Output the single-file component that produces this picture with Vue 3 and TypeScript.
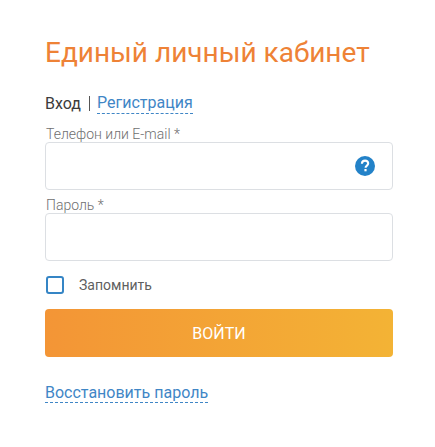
<template>
  <div class="login">
    <h1 class="title">Единый личный кабинет</h1>
    <div class="tabs">
      <span class="tab-active">Вход</span>
      <span class="tab-sep"></span>
      <a class="dashed-link" href="#">Регистрация</a>
    </div>
    <form class="form" @submit.prevent>
      <label class="field">
        <span class="field-label">Телефон или E-mail *</span>
        <span class="input-wrap">
          <input v-model="login" class="input" type="text" />
          <svg class="hint" viewBox="0 0 20 20" aria-hidden="true">
            <circle cx="10" cy="10" r="10" fill="#2382c8" />
            <path d="M6.9 7.7c.1-2 1.400-3.100 3.200-3.100 1.800 0 3.100 1.100 3.100 2.700 0 1.200-.6 1.800-1.500 2.500-.8.6-1.100 1-1.100 1.900" fill="none" stroke="#fff" stroke-width="2.100" />
            <rect x="9.400" y="13" width="2.200" height="2.300" fill="#fff" />
          </svg>
        </span>
      </label>
      <label class="field field-second">
        <span class="field-label">Пароль *</span>
        <input v-model="password" class="input" type="password" />
      </label>
      <label class="remember">
        <input v-model="remember" class="remember-input" type="checkbox" />
        <span class="remember-box"></span>
        <span class="remember-text">Запомнить</span>
      </label>
      <button class="submit" type="submit">ВОЙТИ</button>
    </form>
    <a class="dashed-link restore" href="#">Восстановить пароль</a>
  </div>
</template>

<script setup lang="ts">
import { ref } from 'vue'

const login = ref('')
const password = ref('')
const remember = ref(false)
</script>

<style scoped>
.login {
  width: 348px;
  padding: 37px 0 0 45px;
  font-family: Roboto, "Liberation Sans", sans-serif;
}

.title {
  margin: 0;
  font-size: 28px;
  line-height: 32px;
  font-weight: 400;
  color: #ee8236;
  white-space: nowrap;
}

.tabs {
  display: flex;
  align-items: center;
  margin-top: 24px;
  height: 20px;
  font-size: 16px;
}

.tab-active {
  color: #3c3c3c;
}

.tab-sep {
  width: 1px;
  height: 15px;
  margin: 0 7px 0 8px;
  background: #555;
}

.dashed-link {
  color: #3f86c6;
  text-decoration: none;
  border-bottom: 1px dashed #3f86c6;
}

.tabs .dashed-link {
  padding-bottom: 1px;
}

.form {
  display: flex;
  flex-direction: column;
  margin-top: 13px;
}

.field {
  display: flex;
  flex-direction: column;
}

.field-second {
  margin-top: 7px;
}

.field-label {
  height: 16px;
  padding-left: 1px;
  font-size: 14px;
  line-height: 16px;
  font-weight: 300;
  color: #6f6f6f;
}

.input-wrap {
  position: relative;
  display: block;
}

.input {
  display: block;
  width: 100%;
  height: 48px;
  box-sizing: border-box;
  padding: 0 44px 0 12px;
  background: #fff;
  border: 1px solid #dcdfe3;
  border-radius: 4px;
  outline: none;
}

.hint {
  position: absolute;
  top: 14px;
  right: 18px;
  width: 20px;
  height: 20px;
}

.remember {
  display: flex;
  align-items: center;
  margin-top: 15px;
  padding-left: 1px;
  height: 18px;
}

.remember-input {
  position: absolute;
  opacity: 0;
  width: 0;
  height: 0;
}

.remember-box {
  width: 18px;
  height: 18px;
  box-sizing: border-box;
  border: 2px solid #3585c5;
  border-radius: 3px;
}

.remember-text {
  margin-left: 15px;
  font-size: 14px;
  color: #5f5f5f;
}

.submit {
  height: 48px;
  margin-top: 15px;
  border: 0;
  border-radius: 4px;
  background: linear-gradient(90deg, #f39536, #f3b335);
  color: #fff;
  font-family: inherit;
  font-size: 16px;
}

.restore {
  display: inline-block;
  margin-top: 26px;
  font-size: 16px;
}
</style>
